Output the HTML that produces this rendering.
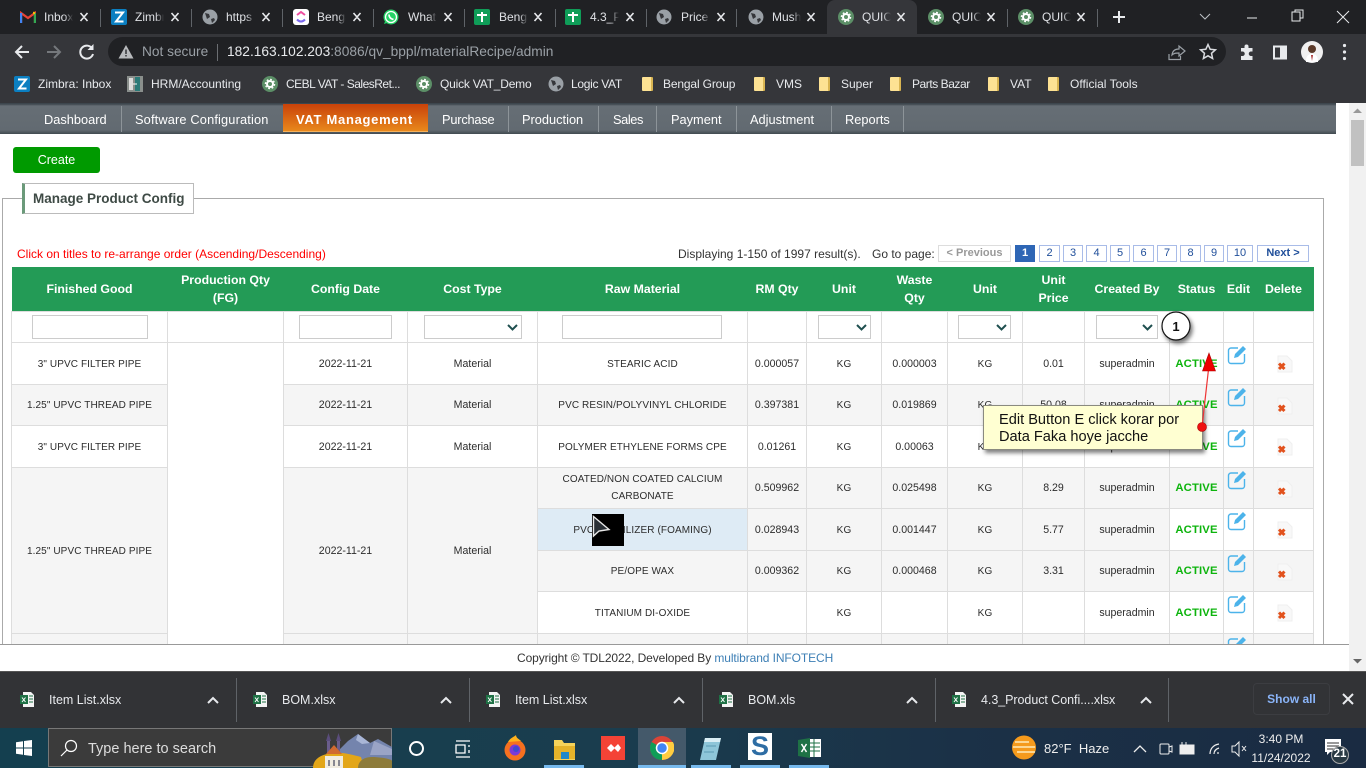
<!DOCTYPE html>
<html><head><meta charset="utf-8"><title>QUICK VAT</title>
<style>
*{box-sizing:border-box}
html,body{margin:0;padding:0;width:1366px;height:768px;overflow:hidden;background:#fff;font-family:"Liberation Sans",sans-serif}
.a{position:absolute;white-space:nowrap}
#tabs{position:absolute;left:0;top:0;width:1366px;height:34px;background:#202124}
.tt{position:absolute;top:9px;font-size:12px;color:#dfe1e5;width:29px;overflow:hidden;white-space:nowrap;line-height:16px;-webkit-mask-image:linear-gradient(90deg,#000 70%,transparent);mask-image:linear-gradient(90deg,#000 70%,transparent)}
.sep{position:absolute;top:9px;width:1px;height:18px;background:#5f6368}
.ico{position:absolute}
.bm{position:absolute;top:76px;font-size:12px;color:#e8eaed;line-height:16px;white-space:nowrap}
.nv{position:absolute;top:111px;font-size:12.8px;color:#fff;line-height:17px;white-space:nowrap}
.ns{position:absolute;top:106px;width:1px;height:26px;background:#8d9499}
table{border-collapse:collapse;table-layout:fixed;position:absolute;left:11px;top:267px;width:1302px;font-size:10.6px;color:#2c2c2c}
td,th{border:1px solid #ddd;text-align:center;padding:2px 0 0;overflow:hidden;line-height:17px}
td.c{font-size:10px;letter-spacing:.1px}
th{background:#239b56;color:#fff;font-size:12.3px;border:0;height:44px;line-height:18px;font-weight:bold;padding-top:1px}
.f td{height:31px;background:#fff}
.g{background:#f5f5f5}.w{background:#fff}
.act{color:#0db40d;font-weight:bold;font-size:11.3px;letter-spacing:.15px}
.in{position:absolute;background:#fff;border:1px solid #ccc;height:24px}
.pg{position:absolute;top:245px;height:17px;border:1px solid #a9bce8;background:#fff;color:#1f4e9a;font-size:11px;line-height:15px;text-align:center}
.dl{position:absolute;top:692px;font-size:12.5px;color:#e8eaed;line-height:16px;white-space:nowrap}
.ds{position:absolute;top:678px;width:1px;height:44px;background:#5f6368}
.fo{position:absolute;top:77px;width:11px;height:14px;background:#fde293;border-radius:1px;border-right:2px solid #d9b552}
</style></head><body>

<div id="tabs"></div>
<div class="a" style="left:827px;top:0;width:90px;height:34px;background:#35363a;border-radius:8px 8px 0 0"></div>
<div class="sep" style="left:100px"></div><div class="sep" style="left:191px"></div><div class="sep" style="left:282px"></div><div class="sep" style="left:373px"></div><div class="sep" style="left:464px"></div><div class="sep" style="left:555px"></div><div class="sep" style="left:646px"></div><div class="sep" style="left:736px"></div><div class="sep" style="left:1007px"></div><div class="sep" style="left:1097px"></div>

<!-- tab icons -->
<svg class="ico" style="left:20px;top:10px" width="16" height="14" viewBox="0 0 16 14"><path d="M1 13V3l7 5 7-5v10" fill="none" stroke="#ea4335" stroke-width="2.2"/><path d="M1 13V3" stroke="#4285f4" stroke-width="2.4"/><path d="M15 13V3" stroke="#34a853" stroke-width="2.4"/><path d="M13 3l2 0" stroke="#fbbc04" stroke-width="2.4"/></svg>
<svg class="ico" style="left:111px;top:9px" width="16" height="16" viewBox="0 0 16 16"><rect width="16" height="16" rx="2" fill="#0b7fc1"/><path d="M4 3.500h8L5 12.500h7.500" fill="none" stroke="#fff" stroke-width="2"/></svg>
<svg class="ico" style="left:202px;top:9px" width="16" height="16" viewBox="0 0 16 16"><circle cx="8" cy="8" r="7.500" fill="#9aa0a6"/><path d="M3 4l4 1 1 3-3 2-1-3zM9 10l3-1 1 2-3 3z" fill="#35363a"/></svg>
<svg class="ico" style="left:293px;top:9px" width="16" height="16" viewBox="0 0 16 16"><rect width="16" height="16" rx="3" fill="#fff"/><path d="M4 6l4-3 4 3" fill="none" stroke="#ee4fa0" stroke-width="2"/><path d="M4 10.500q4 4 8 0" fill="none" stroke="#7b68ee" stroke-width="2"/></svg>
<svg class="ico" style="left:383px;top:9px" width="16" height="16" viewBox="0 0 16 16"><circle cx="8" cy="8" r="7.500" fill="#25d366"/><path d="M1 15l1.500-4 3 2.500z" fill="#25d366"/><circle cx="8" cy="8" r="5.500" fill="none" stroke="#fff" stroke-width="1.300"/><path d="M6 5.500q0 4 4.500 5" fill="none" stroke="#fff" stroke-width="1.700"/></svg>
<svg class="ico" style="left:474px;top:9px" width="16" height="16" viewBox="0 0 16 16"><rect width="16" height="16" rx="2" fill="#0f9d58"/><path d="M3 6h10M8 3v10" stroke="#fff" stroke-width="2"/></svg>
<svg class="ico" style="left:565px;top:9px" width="16" height="16" viewBox="0 0 16 16"><rect width="16" height="16" rx="2" fill="#0f9d58"/><path d="M3 6h10M8 3v10" stroke="#fff" stroke-width="2"/></svg>
<svg class="ico" style="left:656px;top:9px" width="16" height="16" viewBox="0 0 16 16"><circle cx="8" cy="8" r="7.500" fill="#9aa0a6"/><path d="M3 4l4 1 1 3-3 2-1-3zM9 10l3-1 1 2-3 3z" fill="#35363a"/></svg>
<svg class="ico" style="left:748px;top:9px" width="16" height="16" viewBox="0 0 16 16"><circle cx="8" cy="8" r="7.500" fill="#9aa0a6"/><path d="M3 4l4 1 1 3-3 2-1-3zM9 10l3-1 1 2-3 3z" fill="#35363a"/></svg>
<svg class="ico" style="left:838px;top:9px" width="16" height="16" viewBox="0 0 16 16"><circle cx="8" cy="8" r="8" fill="#5c8f67"/><circle cx="8" cy="8" r="3" fill="none" stroke="#fff" stroke-width="2"/><circle cx="8" cy="8" r="4.600" fill="none" stroke="#fff" stroke-width="1.300" stroke-dasharray="1.800 1.800"/></svg>
<svg class="ico" style="left:928px;top:9px" width="16" height="16" viewBox="0 0 16 16"><circle cx="8" cy="8" r="8" fill="#5c8f67"/><circle cx="8" cy="8" r="3" fill="none" stroke="#fff" stroke-width="2"/><circle cx="8" cy="8" r="4.600" fill="none" stroke="#fff" stroke-width="1.300" stroke-dasharray="1.800 1.800"/></svg>
<svg class="ico" style="left:1018px;top:9px" width="16" height="16" viewBox="0 0 16 16"><circle cx="8" cy="8" r="8" fill="#5c8f67"/><circle cx="8" cy="8" r="3" fill="none" stroke="#fff" stroke-width="2"/><circle cx="8" cy="8" r="4.600" fill="none" stroke="#fff" stroke-width="1.300" stroke-dasharray="1.800 1.800"/></svg>

<!-- tab titles -->
<div class="tt" style="left:44px">Inbox</div><div class="tt" style="left:135px">Zimbra</div><div class="tt" style="left:226px">https</div><div class="tt" style="left:317px">Bengal</div><div class="tt" style="left:408px">WhatsApp</div><div class="tt" style="left:499px">Bengal</div><div class="tt" style="left:590px">4.3_Pr</div><div class="tt" style="left:681px">Price</div><div class="tt" style="left:772px">Mushfiq</div><div class="tt" style="left:862px">QUICK</div><div class="tt" style="left:952px">QUICK</div><div class="tt" style="left:1042px">QUICK</div>

<!-- tab close -->
<svg class="ico" style="left:0;top:0" width="1366" height="34" fill="none" stroke="#e8eaed" stroke-width="1.600">
<path d="M80.500 13l7 8m0-8l-7 8M171.500 13l7 8m0-8l-7 8M262.500 13l7 8m0-8l-7 8M353.500 13l7 8m0-8l-7 8M444.500 13l7 8m0-8l-7 8M534.500 13l7 8m0-8l-7 8M626.500 13l7 8m0-8l-7 8M717.500 13l7 8m0-8l-7 8M807.500 13l7 8m0-8l-7 8M897.500 13l7 8m0-8l-7 8M987.500 13l7 8m0-8l-7 8M1077.500 13l7 8m0-8l-7 8"/>
<path d="M1119 11v12M1113 17h12" stroke-width="2"/>
<path d="M1200 14l5 5 5-5" stroke="#bdc1c6" stroke-width="1"/>
<path d="M1247 18h10" stroke-width="1"/>
<path d="M1292 12h8v9h-8zM1295 12v-2h8v8h-3" stroke-width="1"/>
<path d="M1337 11l12 12m0-12l-12 12" stroke-width="1"/>
</svg>

<!-- toolbar -->
<div class="a" style="left:0;top:34px;width:1366px;height:36px;background:#35363a"></div>
<div class="a" style="left:108px;top:37px;width:1118px;height:29px;background:#202124;border-radius:15px"></div>
<svg class="ico" style="left:0;top:34px" width="1366" height="36" fill="none">
<path d="M29 18H16m6-6l-6 6 6 6" stroke="#e8eaed" stroke-width="2"/>
<path d="M47 18h13m-6-6l6 6-6 6" stroke="#75787c" stroke-width="2"/>
<path d="M92.500 15a6.500 6.500 0 1 0 .5 5" stroke="#e8eaed" stroke-width="2"/><path d="M93.500 10v6h-6z" fill="#e8eaed"/>
<path d="M126 11l7.500 13.500h-15z" fill="#b8babd"/><path d="M126 15.500v4.500M126 21v1.500" stroke="#202124" stroke-width="1.300"/>
<path d="M217.500 10v17" stroke="#6b6e72"/>
<path d="M1169 20v5.500h11.500V22M1172 21c.5-4 3-6 7-6v-3l6 5-6 5v-3c-3 0-5 0-7 2z" stroke="#9aa0a6" stroke-width="1.200"/>
<path d="M1208 10.500l2.200 4.800 5.200.5-3.900 3.500 1.100 5.200-4.600-2.700-4.600 2.700 1.100-5.200-3.900-3.500 5.200-.5z" stroke="#dadce0" stroke-width="1.500"/>
<path d="M1241 14h3.500v-1.500a2 2 0 0 1 4 0V14h4v3.500h-1.500a2.200 2.200 0 0 0 0 4.500h1.500v4H1241v-4h1.500a2.200 2.200 0 0 0 0-4.500H1241z" fill="#e8eaed"/>
<rect x="1274" y="12.500" width="12" height="12" stroke="#e8eaed" stroke-width="2"/><rect x="1280" y="12" width="6" height="13" fill="#e8eaed"/>
<circle cx="1344.500" cy="11.500" r="1.600" fill="#e8eaed"/><circle cx="1344.500" cy="18" r="1.600" fill="#e8eaed"/><circle cx="1344.500" cy="24.500" r="1.600" fill="#e8eaed"/>
</svg>
<svg class="ico" style="left:1301px;top:41px" width="22" height="22" viewBox="0 0 22 22"><circle cx="11" cy="11" r="11" fill="#f0f0f0"/><circle cx="11" cy="8" r="4" fill="#5b3a29"/><path d="M5 21c0-7 3-8 6-8s6 1 6 8z" fill="#fff"/><path d="M10 14l1 6 1-6z" fill="#a33"/></svg>
<div class="a" style="left:142px;top:44px;font-size:13.7px;color:#9aa0a6;line-height:16px">Not secure</div>
<div class="a" style="left:227px;top:44px;font-size:13.75px;color:#9aa0a6;line-height:16px"><span style="color:#e8eaed">182.163.102.203</span>:8086/qv_bppl/materialRecipe/admin</div>

<!-- bookmarks -->
<div class="a" style="left:0;top:70px;width:1366px;height:33px;background:#35363a"></div>
<svg class="ico" style="left:14px;top:76px" width="16" height="16" viewBox="0 0 16 16"><rect width="16" height="16" rx="2" fill="#0b7fc1"/><path d="M4 3.500h8L5 12.500h7.500" fill="none" stroke="#fff" stroke-width="2"/></svg>
<svg class="ico" style="left:127px;top:76px" width="16" height="16" viewBox="0 0 16 16"><rect width="16" height="16" fill="#8a8f8c"/><rect x="2" y="2" width="4" height="12" fill="#ddd"/><rect x="8" y="1" width="5" height="14" fill="#2b7a78"/><path d="M6 8h4" stroke="#fff"/></svg>
<svg class="ico" style="left:262px;top:76px" width="16" height="16" viewBox="0 0 16 16"><circle cx="8" cy="8" r="8" fill="#5c8f67"/><circle cx="8" cy="8" r="3" fill="none" stroke="#fff" stroke-width="2"/><circle cx="8" cy="8" r="4.600" fill="none" stroke="#fff" stroke-width="1.300" stroke-dasharray="1.800 1.800"/></svg>
<svg class="ico" style="left:416px;top:76px" width="16" height="16" viewBox="0 0 16 16"><circle cx="8" cy="8" r="8" fill="#5c8f67"/><circle cx="8" cy="8" r="3" fill="none" stroke="#fff" stroke-width="2"/><circle cx="8" cy="8" r="4.600" fill="none" stroke="#fff" stroke-width="1.300" stroke-dasharray="1.800 1.800"/></svg>
<svg class="ico" style="left:548px;top:76px" width="16" height="16" viewBox="0 0 16 16"><circle cx="8" cy="8" r="7.500" fill="#9aa0a6"/><path d="M3 4l4 1 1 3-3 2-1-3zM9 10l3-1 1 2-3 3z" fill="#35363a"/></svg>
<div class="fo" style="left:642px"></div><div class="fo" style="left:754px"></div><div class="fo" style="left:819px"></div><div class="fo" style="left:890px"></div><div class="fo" style="left:988px"></div><div class="fo" style="left:1048px"></div>
<div class="bm" style="left:38px">Zimbra: Inbox</div><div class="bm" style="left:151px">HRM/Accounting</div><div class="bm" style="left:286px;letter-spacing:-.5px">CEBL VAT - SalesRet...</div><div class="bm" style="left:440px;letter-spacing:-.2px">Quick VAT_Demo</div><div class="bm" style="left:571px;letter-spacing:-.3px">Logic VAT</div><div class="bm" style="left:663px;letter-spacing:-.15px">Bengal Group</div><div class="bm" style="left:776px">VMS</div><div class="bm" style="left:841px">Super</div><div class="bm" style="left:912px;letter-spacing:-.45px">Parts Bazar</div><div class="bm" style="left:1010px">VAT</div><div class="bm" style="left:1070px">Official Tools</div>

<!-- app nav -->
<div class="a" style="left:0;top:103px;width:1336px;height:31px;background:linear-gradient(#3d464d 0,#3d464d 1px,#666e75 3px,#626a71 27px,#414a50 31px)"></div>
<div class="a" style="left:283px;top:104px;width:145px;height:28px;background:linear-gradient(#c9420a,#e8881c);border-bottom:1px solid #f4b15c"></div>
<div class="ns" style="left:121px"></div><div class="ns" style="left:508px"></div><div class="ns" style="left:598px"></div><div class="ns" style="left:656px"></div><div class="ns" style="left:736px"></div><div class="ns" style="left:831px"></div><div class="ns" style="left:903px"></div>
<div class="nv" style="left:44px">Dashboard</div><div class="nv" style="left:135px;letter-spacing:.15px">Software Configuration</div><div class="nv" style="left:296px;font-weight:bold;font-size:13px;letter-spacing:.7px">VAT Management</div><div class="nv" style="left:442px;letter-spacing:-.2px">Purchase</div><div class="nv" style="left:522px">Production</div><div class="nv" style="left:613px;letter-spacing:-.4px">Sales</div><div class="nv" style="left:671px">Payment</div><div class="nv" style="left:750px">Adjustment</div><div class="nv" style="left:845px">Reports</div>

<!-- content -->
<div class="a" style="left:13px;top:147px;width:87px;height:26px;background:#009a00;border-radius:3px;color:#fff;font-size:12.5px;text-align:center;line-height:26px">Create</div>
<div class="a" style="left:2px;top:198px;width:1322px;height:470px;border:1px solid #aaa"></div>
<div class="a" style="left:22px;top:183px;width:172px;height:31px;background:#fff;border:1px solid #bbb;border-left:3px solid #6b9a7a;color:#3e4a45;font-size:13.5px;font-weight:bold;line-height:29px;padding-left:8px">Manage Product Config</div>
<div class="a" style="left:17px;top:247px;font-size:12px;color:#f00;line-height:15px">Click on titles to re-arrange order (Ascending/Descending)</div>
<div class="a" style="left:678px;top:247px;font-size:12px;color:#333;line-height:15px">Displaying 1-150 of 1997 result(s).</div>
<div class="a" style="left:872px;top:247px;font-size:12px;color:#333;line-height:15px">Go to page:</div>
<div class="pg" style="left:938px;width:73px;border-color:#ddd;color:#999;font-weight:bold">&lt; Previous</div>
<div class="pg" style="left:1015px;width:20px;background:#2e66b5;border-color:#2e66b5;color:#fff;font-weight:bold">1</div>
<div class="pg" style="left:1039px;width:21px">2</div><div class="pg" style="left:1063px;width:20px">3</div><div class="pg" style="left:1086px;width:21px">4</div><div class="pg" style="left:1110px;width:20px">5</div><div class="pg" style="left:1133px;width:21px">6</div><div class="pg" style="left:1157px;width:20px">7</div><div class="pg" style="left:1180px;width:21px">8</div><div class="pg" style="left:1204px;width:20px">9</div><div class="pg" style="left:1227px;width:26px">10</div><div class="pg" style="left:1257px;width:52px;font-weight:bold">Next &gt;</div>

<div class="a" style="left:0;top:267px;width:1349px;height:377px;overflow:hidden">
<table style="left:11px;top:0">
<colgroup><col style="width:156px"><col style="width:116px"><col style="width:124px"><col style="width:130px"><col style="width:210px"><col style="width:59px"><col style="width:75px"><col style="width:66px"><col style="width:75px"><col style="width:62px"><col style="width:85px"><col style="width:54px"><col style="width:30px"><col style="width:60px"></colgroup>
<tr><th>Finished Good</th><th>Production Qty<br>(FG)</th><th>Config Date</th><th>Cost Type</th><th>Raw Material</th><th>RM Qty</th><th>Unit</th><th>Waste<br>Qty</th><th>Unit</th><th>Unit<br>Price</th><th>Created By</th><th>Status</th><th>Edit</th><th>Delete</th></tr>
<tr class="f"><td></td><td></td><td></td><td></td><td></td><td></td><td></td><td></td><td></td><td></td><td></td><td></td><td></td><td></td></tr>
<tr class="w" style="height:42px"><td class="c">3" UPVC FILTER PIPE</td><td rowspan="9" class="w"></td><td>2022-11-21</td><td>Material</td><td class="c">STEARIC ACID</td><td>0.000057</td><td class="c">KG</td><td>0.000003</td><td class="c">KG</td><td>0.01</td><td>superadmin</td><td class="act">ACTIVE</td><td></td><td></td></tr>
<tr class="g" style="height:41px"><td class="c">1.25" UPVC THREAD PIPE</td><td>2022-11-21</td><td>Material</td><td class="c">PVC RESIN/POLYVINYL CHLORIDE</td><td>0.397381</td><td class="c">KG</td><td>0.019869</td><td class="c">KG</td><td>50.08</td><td>superadmin</td><td class="act">ACTIVE</td><td></td><td></td></tr>
<tr class="w" style="height:42px"><td class="c">3" UPVC FILTER PIPE</td><td>2022-11-21</td><td>Material</td><td class="c">POLYMER ETHYLENE FORMS CPE</td><td>0.01261</td><td class="c">KG</td><td>0.00063</td><td class="c">KG</td><td>1.20</td><td>superadmin</td><td class="act">ACTIVE</td><td></td><td></td></tr>
<tr class="g" style="height:41px"><td class="c" rowspan="4" style="background:#f5f5f5">1.25" UPVC THREAD PIPE</td><td rowspan="4" style="background:#f5f5f5">2022-11-21</td><td rowspan="4" style="background:#f5f5f5">Material</td><td class="c" style="padding:0">COATED/NON COATED CALCIUM<br>CARBONATE</td><td>0.509962</td><td class="c">KG</td><td>0.025498</td><td class="c">KG</td><td>8.29</td><td>superadmin</td><td class="act">ACTIVE</td><td></td><td></td></tr>
<tr style="height:42px;background:#deebf5"><td class="c">PVC STABILIZER (FOAMING)</td><td style="background:#f5f5f5">0.028943</td><td class="c" style="background:#f5f5f5">KG</td><td style="background:#f5f5f5">0.001447</td><td class="c" style="background:#f5f5f5">KG</td><td style="background:#f5f5f5">5.77</td><td style="background:#f5f5f5">superadmin</td><td class="act" style="background:#fff">ACTIVE</td><td style="background:#fff"></td><td style="background:#fff"></td></tr>
<tr class="g" style="height:41px"><td class="c">PE/OPE WAX</td><td>0.009362</td><td class="c">KG</td><td>0.000468</td><td class="c">KG</td><td>3.31</td><td>superadmin</td><td class="act">ACTIVE</td><td></td><td></td></tr>
<tr class="w" style="height:42px"><td class="c">TITANIUM DI-OXIDE</td><td></td><td class="c">KG</td><td></td><td class="c">KG</td><td></td><td>superadmin</td><td class="act">ACTIVE</td><td></td><td></td></tr>
<tr class="g" style="height:41px"><td></td><td></td><td></td><td></td><td></td><td></td><td></td><td></td><td></td><td></td><td></td><td></td><td></td></tr>
</table>
</div>

<!-- filter inputs -->
<div class="in" style="left:32px;top:315px;width:116px"></div>
<div class="in" style="left:299px;top:315px;width:93px"></div>
<div class="in" style="left:424px;top:315px;width:98px"></div>
<div class="in" style="left:562px;top:315px;width:160px"></div>
<div class="in" style="left:818px;top:315px;width:53px"></div>
<div class="in" style="left:958px;top:315px;width:53px"></div>
<div class="in" style="left:1096px;top:315px;width:62px"></div>
<svg class="ico" style="left:0;top:0;pointer-events:none" width="1366" height="644" fill="none" stroke="#1f4f4f" stroke-width="2">
<path d="M508 325l4.500 4.500 4.500-4.500M857 325l4.500 4.500 4.500-4.500M997 325l4.500 4.500 4.500-4.500M1143 325l4.500 4.500 4.500-4.500"/>
</svg>

<!-- edit + delete icons -->
<svg class="ico" style="left:1224px;top:343px" width="70" height="301" viewBox="0 0 70 301" fill="none">
<defs>
<g id="e"><path d="M14 5H7a2.500 2.500 0 0 0-2.500 2.500V18A2.500 2.500 0 0 0 7 20.500h11a2.500 2.500 0 0 0 2.500-2.500V11" stroke="#4cb3ea" stroke-width="1.400"/><path d="M10 15l1-4 8-8 3 3-8 8z" fill="#4cb3ea"/></g>
<g id="d"><path d="M54 13h9l5 5v11H54z" fill="#f8f8f8" stroke="#efefef"/><path d="M55 20.500l5.500 5.500m0-5.500L55 26" stroke="#e2521d" stroke-width="3"/></g>
</defs>
<use href="#e" y="0"/><use href="#d" y="0"/>
<use href="#e" y="42"/><use href="#d" y="42"/>
<use href="#e" y="83"/><use href="#d" y="83"/>
<use href="#e" y="125"/><use href="#d" y="125"/>
<use href="#e" y="166"/><use href="#d" y="166"/>
<use href="#e" y="208"/><use href="#d" y="208"/>
<use href="#e" y="249"/><use href="#d" y="249"/>
<use href="#e" y="291"/>
</svg>

<!-- annotations -->
<div class="a" style="left:983px;top:405px;width:220px;height:45px;background:#ffffd2;border:1px solid #8a8a80;box-shadow:2px 3px 4px rgba(0,0,0,.5);font-size:14.6px;line-height:17px;color:#111;padding:6px 0 0 15px;white-space:normal">Edit Button E click korar por<br>Data Faka hoye jacche</div>
<svg class="ico" style="left:1150px;top:305px" width="90" height="135" viewBox="0 0 90 135" fill="none">
<path d="M52 122L59 60" stroke="#e33" stroke-width="1.200"/>
<path d="M59 48l-6.500 18h13z" fill="#ee0000" stroke="#a00" stroke-width=".6"/>
<circle cx="52" cy="122" r="4.500" fill="#ee1111" stroke="#a00" stroke-width=".6"/>
<circle cx="26" cy="21" r="14" fill="#fff" stroke="#111" stroke-width="1.200" style="filter:drop-shadow(2px 3px 2px rgba(0,0,0,.55))"/>
<text x="26" y="26" text-anchor="middle" font-family="Liberation Sans" font-size="13" font-weight="bold" fill="#111">1</text>
</svg>
<div class="a" style="left:592px;top:514px;width:32px;height:32px;background:#000"></div>
<svg class="ico" style="left:592px;top:514px" width="32" height="32" viewBox="0 0 32 32"><path d="M1.500 2.500L17 15.500 7 17 1.500 22z" fill="#2a3036" stroke="#e8e8e8" stroke-width="1.400"/></svg>

<!-- footer -->
<div class="a" style="left:0;top:644px;width:1349px;height:27px;background:#fff;border-top:1px solid #999"></div>
<div class="a" style="left:517px;top:651px;font-size:12px;letter-spacing:-.1px;color:#333;line-height:15px">Copyright © TDL2022, Developed By <span style="color:#3d7fb5">multibrand INFOTECH</span></div>

<!-- scrollbar -->
<div class="a" style="left:1349px;top:103px;width:17px;height:568px;background:#f1f1f1"></div>
<div class="a" style="left:1351px;top:120px;width:13px;height:46px;background:#c1c1c1"></div>
<svg class="ico" style="left:1349px;top:103px" width="17" height="568"><path d="M4 10l4.500-4.500L13 10z" fill="#999"/><path d="M4 556l4.500 4.500L13 556z" fill="#666"/></svg>

<!-- download bar -->
<div class="a" style="left:0;top:671px;width:1366px;height:57px;background:#323336;border-top:1px solid #555"></div>
<div class="ds" style="left:236px"></div><div class="ds" style="left:469px"></div><div class="ds" style="left:702px"></div><div class="ds" style="left:935px"></div><div class="ds" style="left:1168px"></div>
<svg class="ico" style="left:0;top:690px" width="1366" height="20" viewBox="0 0 1366 20" fill="none">
<defs><g id="x"><path d="M3 2h8l3 3v12H3z" fill="#f4f4f4"/><rect x="0" y="5" width="8" height="9" fill="#1e7145"/><path d="M9 6h4M9 9h4M9 12h4" stroke="#1e7145"/><path d="M2 7.500l3.500 4.500m0-4.500L2 12" stroke="#fff"/></g>
<path id="c" d="M0 5l5-5 5 5" stroke="#e8eaed" stroke-width="2"/></defs>
<use href="#x" x="20"/><use href="#x" x="253"/><use href="#x" x="486"/><use href="#x" x="719"/><use href="#x" x="952"/>
<use href="#c" x="208" y="8"/><use href="#c" x="441" y="8"/><use href="#c" x="674" y="8"/><use href="#c" x="907" y="8"/><use href="#c" x="1141" y="8"/>
<path d="M1343 4l10 10m0-10l-10 10" stroke="#e8eaed" stroke-width="2"/>
</svg>
<div class="dl" style="left:49px">Item List.xlsx</div><div class="dl" style="left:282px">BOM.xlsx</div><div class="dl" style="left:515px">Item List.xlsx</div><div class="dl" style="left:748px">BOM.xls</div><div class="dl" style="left:981px;letter-spacing:-.05px">4.3_Product Confi....xlsx</div>
<div class="a" style="left:1253px;top:683px;width:77px;height:32px;border:1px solid #3c3d41;border-radius:4px;color:#8ab4f8;font-size:12px;font-weight:bold;text-align:center;line-height:30px">Show all</div>

<!-- taskbar -->
<div class="a" style="left:0;top:728px;width:1366px;height:40px;background:linear-gradient(90deg,#143f4f 0,#1a3d4e 45%,#1b3147 70%,#1a2b42 100%)"></div>
<svg class="ico" style="left:16px;top:740px" width="16" height="16" viewBox="0 0 16 16" fill="#fff"><path d="M0 2.200l7-1v6.300H0zM8 1l8-1v7.500H8zM0 8.500h7v6.300l-7-1zM8 8.500h8V16l-8-1z"/></svg>
<div class="a" style="left:48px;top:728px;width:344px;height:39px;background:#3b3b3b;border:1px solid #777"></div>
<svg class="ico" style="left:60px;top:739px" width="18" height="18" fill="none" stroke="#fff" stroke-width="1.200"><circle cx="11" cy="7" r="5.500"/><path d="M7 11l-6 6"/></svg>
<div class="a" style="left:88px;top:741px;font-size:14.5px;color:#ddd;line-height:17px">Type here to search</div>
<svg class="ico" style="left:312px;top:729px" width="80" height="39" viewBox="0 0 80 39"><path d="M22 26l14-14 10-7 12 9 8-4 14 8v20H22z" fill="#7484ad"/><path d="M46 5l12 9-8 1-6-4z" fill="#a9b6d6"/><path d="M62 12l18 8v6H58z" fill="#9aa4c6"/><path d="M1 39c0-9 8-14 20-15 10-1 20 2 28 4l3 11z" fill="#e3a618"/><path d="M46 39c0-7 6-11 14-11s20 2 20 4v7z" fill="#8d7b3a"/><rect x="15" y="12" width="3" height="12" fill="#6a5d8c"/><rect x="25" y="12" width="3" height="12" fill="#6a5d8c"/><path d="M16.500 4l-2.500 8h5zM26.500 4l-2.500 8h5z" fill="#5a4d7c"/><path d="M22 16l-8 9h16z" fill="#d06a30"/><rect x="13" y="27" width="18" height="12" fill="#f1ece0"/><path d="M17 31v6M22 31v6M27 31v6" stroke="#667" stroke-width="1.500"/></svg>
<svg class="ico" style="left:400px;top:728px" width="440" height="40" viewBox="0 0 440 40" fill="none">
<circle cx="16.500" cy="20.500" r="6.500" stroke="#fff" stroke-width="2"/>
<path d="M56 13h14M56 29h14M56 17h9v8h-9zM69 17v2M69 22v3" stroke="#fff" stroke-width="1.300"/>
<circle cx="115" cy="22" r="10.500" fill="#f6701f"/><path d="M108 14c2-4 6-5 8-7 0 3 3 4 5 6z" fill="#ffb21d"/><circle cx="115" cy="22" r="5.500" fill="#7b3ad6"/><circle cx="116" cy="21" r="3" fill="#3d4ad1"/>
<path d="M154 12h8l2 3h11v17h-21z" fill="#f6d35a"/><rect x="154" y="18" width="21" height="13" fill="#e5b32a"/><rect x="161" y="24" width="8" height="7" fill="#1f88c9"/>
<rect x="201" y="8" width="24" height="24" fill="#f44336"/><path d="M207 20l4-4 4 4-4 4zM214 20l4-4 3 4-3 4z" fill="#fff"/>
</svg>
<div class="a" style="left:638px;top:728px;width:48px;height:40px;background:#44596a"></div>
<svg class="ico" style="left:650px;top:736px" width="24" height="24" viewBox="0 0 24 24"><circle cx="12" cy="12" r="12" fill="#db4437"/><path d="M12 12L1.600 18A12 12 0 0 0 12 24z" fill="#0f9d58"/><path d="M12 12l10.400 6A12 12 0 0 1 12 24z" fill="#ffcd40"/><path d="M12 6h10.900A12 12 0 0 1 17 22.900z" fill="#ffcd40"/><path d="M1.600 6A12 12 0 0 0 7 22.900L12 12z" fill="#0f9d58"/><circle cx="12" cy="12" r="5.500" fill="#4285f4" stroke="#fff" stroke-width="1.500"/></svg>
<svg class="ico" style="left:698px;top:736px" width="28" height="26" viewBox="0 0 28 26"><path d="M7 2h16l-5 22H2z" fill="#8ec6d9"/><path d="M7 2h16l-1 4H6z" fill="#d9eef5"/><path d="M8 10l10 0M6 16h10" stroke="#5b9bb3"/></svg>
<div class="a" style="left:748px;top:733px;width:24px;height:27px;background:#fff;color:#2e6da4;font-size:27px;font-weight:bold;line-height:27px;text-align:center">S</div>
<svg class="ico" style="left:798px;top:738px" width="24" height="20" viewBox="0 0 24 20"><rect x="10" y="1" width="13" height="18" fill="#fff"/><path d="M11 5h11M11 9h11M11 13h11M16 1v18" stroke="#1e7145"/><path d="M0 2l12-2v20L0 18z" fill="#1e7145"/><path d="M3.500 6l5 8m0-8l-5 8" stroke="#fff" stroke-width="1.500"/></svg>
<div class="a" style="left:544px;top:765px;width:40px;height:3px;background:#76b9ed"></div>
<div class="a" style="left:638px;top:765px;width:48px;height:3px;background:#76b9ed"></div>
<div class="a" style="left:691px;top:765px;width:40px;height:3px;background:#76b9ed"></div>
<div class="a" style="left:740px;top:765px;width:40px;height:3px;background:#76b9ed"></div>
<div class="a" style="left:789px;top:765px;width:40px;height:3px;background:#76b9ed"></div>
<svg class="ico" style="left:1012px;top:735px" width="24" height="25" viewBox="0 0 24 25"><circle cx="12" cy="12.500" r="12" fill="#f59a1c"/><path d="M3 7h14M1 12h22M5 17h18" stroke="#ffe9b8" stroke-width="1.500"/></svg>
<div class="a" style="left:1044px;top:741px;font-size:13px;color:#eee;line-height:16px">82°F&nbsp;&nbsp;Haze</div>
<svg class="ico" style="left:1130px;top:738px" width="160" height="22" viewBox="0 0 160 22" fill="none" stroke="#eee" stroke-width="1">
<path d="M4 14l6-6 6 6" stroke-width="1.300"/>
<rect x="30" y="6" width="9" height="10" rx="1"/><path d="M39 9l3-1v6l-3-1"/>
<rect x="50" y="7" width="14" height="9" fill="#eee"/><path d="M52 4v3M56 4v3"/>
<path d="M80 16c0-5 3-9 9-10M84 16c0-3 2-5 5-6M88 16v-2" stroke-width="1.200"/>
<path d="M102 8h3l4-4v14l-4-4h-3zM112 8l4 5m0-5l-4 5"/>
</svg>
<div class="a" style="left:1249px;top:730px;width:64px;text-align:center;font-size:12px;color:#eee;line-height:19px">3:40 PM<br>11/24/2022</div>
<svg class="ico" style="left:1324px;top:738px" width="26" height="28" viewBox="0 0 26 28"><path d="M1 1h16v13H6l-3 3v-3H1z" fill="#fff"/><path d="M3 5h12M3 8h12M3 11h9" stroke="#333"/><circle cx="16" cy="17" r="8.500" fill="#2a3a44" stroke="#aaa"/></svg>
<div class="a" style="left:1331px;top:747px;width:18px;text-align:center;font-size:11.5px;font-weight:bold;color:#fff;line-height:15px">21</div>

</body></html>
